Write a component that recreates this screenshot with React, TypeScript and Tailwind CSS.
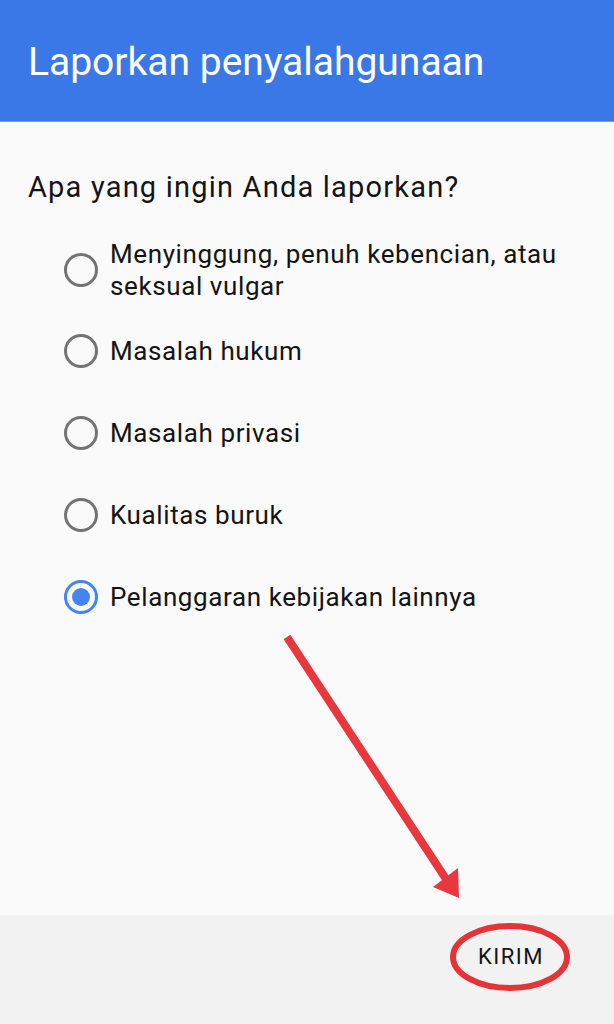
import React from "react";

const options = [
  { label: "Menyinggung, penuh kebencian, atau seksual vulgar", h: "h-[80px]" },
  { label: "Masalah hukum", h: "h-[82px]" },
  { label: "Masalah privasi", h: "h-[82px]" },
  { label: "Kualitas buruk", h: "h-[82px]" },
  { label: "Pelanggaran kebijakan lainnya", h: "h-[82px]", checked: true },
];

function Radio({ checked }: { checked?: boolean }) {
  if (checked) {
    return (
      <div className="w-[34px] h-[34px] rounded-full border-[3px] border-[#4285f4] flex items-center justify-center flex-shrink-0">
        <div className="w-[18px] h-[18px] rounded-full bg-[#4285f4]" />
      </div>
    );
  }
  return <div className="w-[34px] h-[34px] rounded-full border-[3px] border-[#737373] flex-shrink-0" />;
}

export default function App() {
  return (
    <div className="relative flex flex-col w-[614px] h-[1024px] bg-[#fafafa] overflow-hidden">
      <header className="h-[122px] bg-[#3b78e7] flex items-center pl-[28px] pt-[4px] border-b border-[#6c9be8]">
        <h1 className="text-[39px] text-white font-['Roboto',sans-serif] leading-none">
          Laporkan penyalahgunaan
        </h1>
      </header>

      <main className="flex-1 pt-[47px]">
        <p className="pl-[28px] text-[29px] leading-[36px] tracking-[1.2px] text-[#141414] font-['Roboto',sans-serif]">
          Apa yang ingin Anda laporkan?
        </p>
        <ul className="mt-[25px] pl-[64px] pr-[30px]">
          {options.map((o) => (
            <li key={o.label} className={`flex items-center gap-[12px] ${o.h}`}>
              <Radio checked={o.checked} />
              <span className="text-[26px] leading-[32px] tracking-[0.6px] text-[#141414] font-['Roboto',sans-serif]">
                {o.label}
              </span>
            </li>
          ))}
        </ul>
      </main>

      <footer className="h-[109px] bg-[#f2f2f2] flex items-start justify-end pt-[31px] pr-[70px]">
        <button className="text-[22px] tracking-[1.5px] text-[#141414] font-['Roboto',sans-serif] leading-none">
          KIRIM
        </button>
      </footer>

      {/* red annotation drawn over the screenshot */}
      <svg className="absolute inset-0 pointer-events-none" width="614" height="1024" viewBox="0 0 614 1024">
        <line x1="287" y1="637" x2="448" y2="882" stroke="#e8383d" strokeWidth="8" />
        <polygon points="459,898 433,887 458,868" fill="#e8383d" />
        <ellipse cx="510" cy="957" rx="57" ry="31" fill="none" stroke="#e53337" strokeWidth="6" />
      </svg>
    </div>
  );
}
